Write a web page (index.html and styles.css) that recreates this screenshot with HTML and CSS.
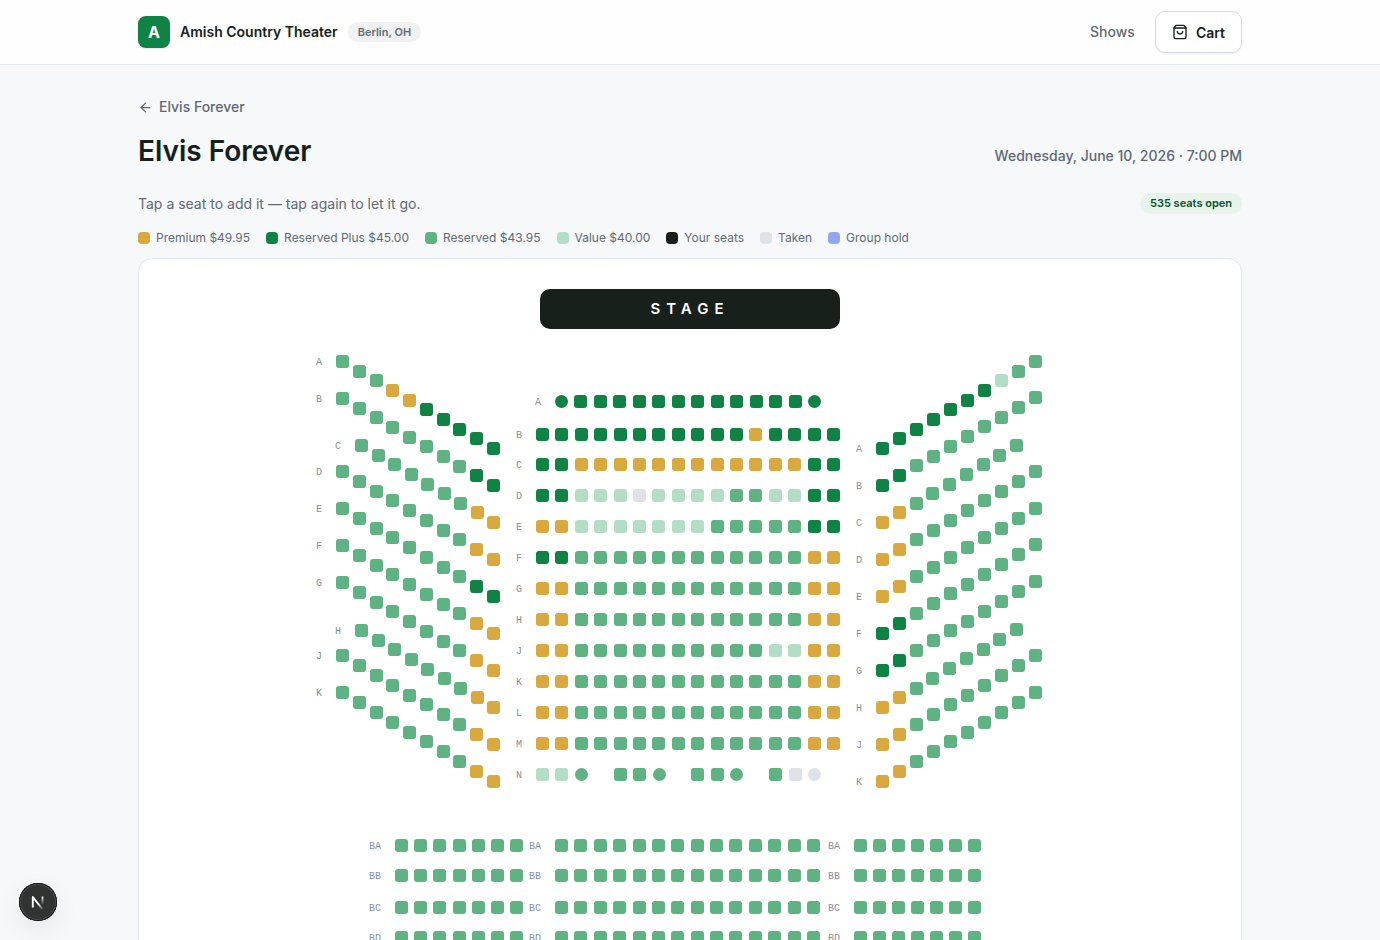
FILE: index.html
```
<!DOCTYPE html>
<html lang="en">
<head>
    <meta charset="UTF-8">
    <meta name="viewport" content="width=device-width, initial-scale=1.0">
    <title>Elvis Forever - Amish Country Theater</title>
    <link rel="stylesheet" href="styles.css">
</head>
<body>
  <header class="site-header">
    <div class="container header-inner">
        <a href="#" class="brand">
            <span class="logo">A</span>
            <span class="brand-name">Amish Country Theater</span>
            <span class="city">Berlin, OH</span>
        </a>
        <nav>
            <a href="#" class="nav-link">Shows</a>
            <button class="cart">
                <svg width="16" height="16" viewBox="0 0 24 24" fill="none" stroke="currentColor" stroke-width="2" stroke-linecap="round" stroke-linejoin="round"><path d="M6 2 3 6v14a2 2 0 0 0 2 2h14a2 2 0 0 0 2-2V6l-3-4Z"/><path d="M3 6h18"/><path d="M16 11a4 4 0 0 1-8 0"/></svg>
                Cart
            </button>
        </nav>
    </div>
  </header>
  <main class="container">
    <a href="#" class="back">
        <svg width="15" height="15" viewBox="0 0 24 24" fill="none" stroke="currentColor" stroke-width="2" stroke-linecap="round" stroke-linejoin="round"><path d="m12 19-7-7 7-7"/><path d="M19 12H5"/></svg>
        Elvis Forever
    </a>
    <div class="title-row">
        <h1>Elvis Forever</h1>
        <p class="date">Wednesday, June 10, 2026 · 7:00 PM</p>
    </div>
    <div class="hint-row">
        <p>Tap a seat to add it — tap again to let it go.</p>
        <span class="open-count">535 seats open</span>
    </div>
    <ul class="legend">
        <li><span class="swatch premium"></span>Premium $49.95</li>
        <li><span class="swatch plus"></span>Reserved Plus $45.00</li>
        <li><span class="swatch reserved"></span>Reserved $43.95</li>
        <li><span class="swatch value"></span>Value $40.00</li>
        <li><span class="swatch mine"></span>Your seats</li>
        <li><span class="swatch taken"></span>Taken</li>
        <li><span class="swatch group"></span>Group hold</li>
    </ul>
    <section class="panel">
        <div class="stage">STAGE</div>
        <div class="seat-map" id="seatMap"></div>
    </section>
  </main>
  <button class="dev-badge" aria-label="Open dev tools">
    <svg width="38" height="38" viewBox="0 0 38 38" fill="none">
        <defs>
            <linearGradient id="diag" x1="20" y1="20" x2="25" y2="26" gradientUnits="userSpaceOnUse"><stop stop-color="#fff"/><stop offset="1" stop-color="#fff" stop-opacity="0"/></linearGradient>
            <linearGradient id="stem" x1="24" y1="13" x2="24" y2="22" gradientUnits="userSpaceOnUse"><stop stop-color="#fff"/><stop offset="1" stop-color="#fff" stop-opacity="0"/></linearGradient>
        </defs>
        <path d="M13.8 24.5V14l10 12.6" stroke="url(#diag)" stroke-width="1.9" stroke-linejoin="round"/>
        <path d="M23.5 13.5v9" stroke="url(#stem)" stroke-width="1.8"/>
    </svg>
  </button>
  <script>
    const map = document.getElementById("seatMap");
    const types = { p: "premium", r: "plus", s: "reserved", v: "value", t: "taken" };

    // [label, x of first seat, y of first seat, x of last, y of last, seats]
    // capital letter = round seat, dot = empty spot
    const rows = [
        ["A", 26, 26, 177, 113, "ssspprrrrr"],
        ["B", 26, 63, 177, 150, "ssssssssrr"],
        ["C", 45, 110, 177, 187, "ssssssspp"],
        ["D", 26, 136, 177, 224, "sssssssspp"],
        ["E", 26, 173, 177, 261, "ssssssssrr"],
        ["F", 26, 210, 177, 298, "sssssssspp"],
        ["G", 26, 247, 177, 335, "sssssssspp"],
        ["H", 45, 295, 177, 372, "ssssssspp"],
        ["J", 26, 320, 177, 409, "sssssssspp"],
        ["K", 26, 357, 177, 446, "sssssssspp"],

        ["A", 245, 66, 498, 66, "RrrrrrrrrrrrrR"],
        ["B", 226, 99, 517, 99, "rrrrrrrrrrrprrrr"],
        ["C", 226, 129, 517, 129, "rrpppppppppppprr"],
        ["D", 226, 160, 517, 160, "rrvvvtvvvvssvvrr"],
        ["E", 226, 191, 517, 191, "ppvvvvvvvsssssrr"],
        ["F", 226, 222, 517, 222, "rrsssssssssssspp"],
        ["G", 226, 253, 517, 253, "ppsssssssssssspp"],
        ["H", 226, 284, 517, 284, "ppsssssssssssspp"],
        ["J", 226, 315, 517, 315, "ppssssssssssvvpp"],
        ["K", 226, 346, 517, 346, "ppsssssssssssspp"],
        ["L", 226, 377, 517, 377, "ppsssssssssssspp"],
        ["M", 226, 408, 517, 408, "ppsssssssssssspp"],
        ["N", 226, 439, 498, 439, "vvS.ssS.ssS.stT"],

        ["A", 566, 113, 719, 26, "rrrrrrrvss"],
        ["B", 566, 150, 719, 62, "rrssssssss"],
        ["C", 566, 187, 700, 110, "ppsssssss"],
        ["D", 566, 224, 719, 136, "ppssssssss"],
        ["E", 566, 261, 719, 173, "ppssssssss"],
        ["F", 566, 298, 719, 209, "rrssssssss"],
        ["G", 566, 335, 719, 246, "rrssssssss"],
        ["H", 566, 372, 700, 294, "ppsssssss"],
        ["J", 566, 409, 719, 320, "ppssssssss"],
        ["K", 566, 446, 719, 357, "ppssssssss"]
    ];
    const rearRows = [["BA", 510], ["BB", 540], ["BC", 572], ["BD", 602], ["BE", 633], ["BF", 664]];
    for (let [label, y] of rearRows) {
        rows.push([label, 85, y, 200, y, "sssssss"]);
        rows.push([label, 245, y, 497, y, "ssssssssssssss"]);
        rows.push([label, 544, y, 658, y, "sssssss"]);
    }

    for (let [label, x1, y1, x2, y2, seats] of rows) {
        const tag = document.createElement("span");
        tag.className = "row-label";
        tag.textContent = label;
        tag.style.left = (x1 - 34) + "px";
        tag.style.top = y1 + "px";
        map.appendChild(tag);
        for (let i = 0; i < seats.length; i++) {
            const code = seats[i];
            if (code === ".") continue;
            const type = types[code.toLowerCase()];
            const seat = document.createElement("button");
            seat.className = "seat " + type;
            if (code !== code.toLowerCase()) seat.classList.add("round");
            seat.style.left = Math.round(x1 + (x2 - x1) * i / (seats.length - 1)) + "px";
            seat.style.top = Math.round(y1 + (y2 - y1) * i / (seats.length - 1)) + "px";
            seat.setAttribute("aria-label", `Row ${label} seat ${i + 1}`);
            seat.disabled = type === "taken";
            seat.onclick = () => seat.classList.toggle("mine");
            map.appendChild(seat);
        }
    }
  </script>
</body>
</html>
```
FILE: styles.css
```
* {
    box-sizing: border-box;
}
body {
    margin: 0;
    font-family: Inter, "Liberation Sans", sans-serif;
    font-size: 14px;
    line-height: 20px;
    color: #17201b;
    background-color: #f6f8fa;
}
h1, p, ul {
    margin: 0;
    padding: 0;
}
a {
    color: inherit;
    text-decoration: none;
}
button {
    font-family: inherit;
    cursor: pointer;
}
.container {
    max-width: 1152px;
    margin: 0 auto;
    padding: 0 24px;
}
.site-header {
    background-color: #fefefe;
    border-bottom: 1px solid #e1e7ee;
}
.header-inner {
    display: flex;
    justify-content: space-between;
    align-items: center;
    height: 64px;
}
.brand, nav {
    display: flex;
    align-items: center;
}
.brand {
    gap: 10px;
}
.logo {
    width: 32px;
    height: 32px;
    border-radius: 8px;
    background-color: #0f8344;
    color: #fff;
    font-size: 16px;
    font-weight: 700;
    line-height: 32px;
    text-align: center;
    box-shadow: 0 1px 2px rgba(0, 0, 0, 0.1);
}
.brand-name {
    font-size: 14px;
    font-weight: 600;
}
.city {
    padding: 0 10px;
    border-radius: 10px;
    background-color: #eff1f3;
    color: #636b78;
    font-size: 11px;
    font-weight: 600;
}
nav {
    gap: 20px;
}
.nav-link {
    color: #5f6875;
    font-weight: 500;
}
.cart {
    display: flex;
    align-items: center;
    gap: 8px;
    height: 42px;
    padding: 0 16px;
    border: 1px solid #d3dae3;
    border-radius: 10px;
    background-color: #fff;
    color: #17201b;
    font-size: 14px;
    font-weight: 600;
    box-shadow: 0 1px 2px rgba(0, 0, 0, 0.06);
}
main.container {
    padding-top: 32px;
    padding-bottom: 48px;
}
.back {
    display: flex;
    align-items: center;
    gap: 6px;
    width: fit-content;
    color: #5f6875;
    font-weight: 500;
}
.title-row {
    display: flex;
    justify-content: space-between;
    align-items: baseline;
    margin-top: 16px;
}
h1 {
    font-size: 28px;
    font-weight: 600;
    line-height: 36px;
}
.date {
    color: #5f6875;
    font-weight: 500;
}
.hint-row {
    display: flex;
    justify-content: space-between;
    align-items: center;
    margin-top: 24px;
    color: #5f6875;
}
.open-count {
    padding: 0 10px;
    border-radius: 11px;
    background-color: #e6f4eb;
    color: #0b5029;
    font-size: 11px;
    font-weight: 600;
    line-height: 21px;
}
.legend {
    display: flex;
    flex-wrap: wrap;
    gap: 4px 16px;
    margin-top: 16px;
    list-style: none;
    color: #5f6875;
    font-size: 12px;
    line-height: 16px;
}
.legend li {
    display: flex;
    align-items: center;
    gap: 6px;
}
.swatch {
    width: 12px;
    height: 12px;
    border-radius: 4px;
}
.panel {
    margin-top: 12px;
    padding: 30px 16px;
    border: 1px solid #e4e9ef;
    border-radius: 14px;
    background-color: #fff;
    box-shadow: 0 1px 2px rgba(0, 0, 0, 0.05);
    overflow-x: auto;
}
.stage {
    max-width: 300px;
    height: 40px;
    margin: 0 auto;
    border-radius: 10px;
    background-color: #17201b;
    color: #fff;
    font-size: 15px;
    font-weight: 600;
    line-height: 40px;
    letter-spacing: 6px;
    text-align: center;
}
.seat-map {
    position: relative;
    width: 760px;
    height: 690px;
    margin: 0 auto;
}
.seat {
    position: absolute;
    width: 13px;
    height: 13px;
    padding: 0;
    border: none;
    border-radius: 3px;
}
.round {
    border-radius: 50%;
}
.row-label {
    position: absolute;
    width: 20px;
    color: #878e99;
    font-family: "Liberation Mono", monospace;
    font-size: 10px;
    line-height: 16px;
    text-align: right;
}
.premium {
    background-color: #d9a83f;
}
.plus {
    background-color: #0f8344;
}
.reserved {
    background-color: #5fb281;
}
.value {
    background-color: #b4ddc5;
}
.taken {
    background-color: #dfe2e8;
}
.group {
    background-color: #93a8eb;
}
.mine {
    background-color: #17201b;
}
.dev-badge {
    position: fixed;
    left: 19px;
    bottom: 19px;
    width: 38px;
    height: 38px;
    padding: 0;
    border: none;
    border-radius: 50%;
    background-color: #303331;
    box-shadow: inset 0 0 0 1px #171717, inset 0 0 0 2px #4a4d4b, 0 8px 24px rgba(0, 0, 0, 0.08);
}
.dev-badge svg {
    display: block;
}
```
